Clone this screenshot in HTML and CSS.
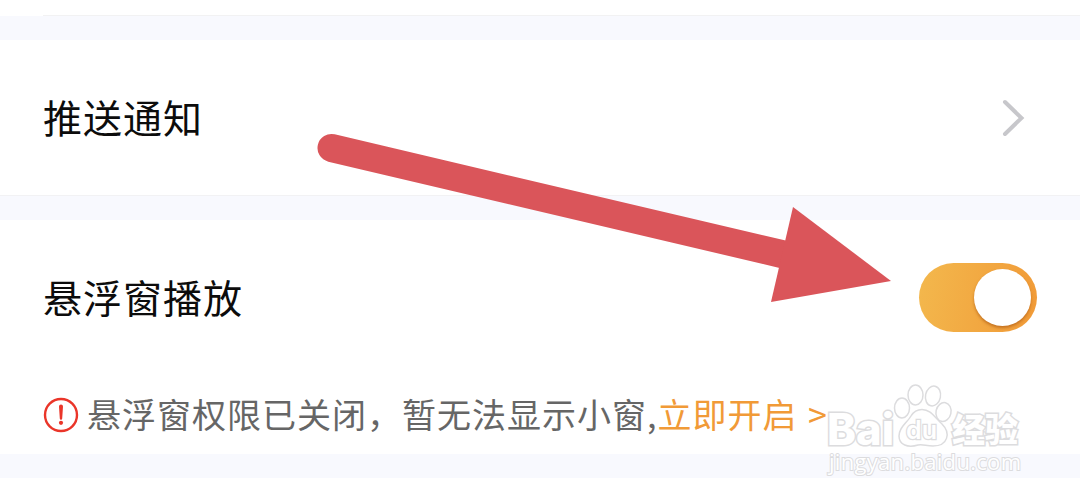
FILE: index.html
```html
<!DOCTYPE html>
<html lang="zh-CN">
<head>
    <meta charset="UTF-8">
    <meta name="viewport" content="width=device-width, initial-scale=1.0">
    <title>设置</title>
    <link rel="stylesheet" href="styles.css">
</head>
<body>
    <div class="wrap">
        <div class="prev"></div>
        <div class="gap"></div>
        <div class="item push">
            <span class="title">推送通知</span>
            <svg class="more" width="24" height="40" viewBox="0 0 24 40">
                <path d="M3 4L19.500 20L3 36"/>
            </svg>
        </div>
        <div class="gap line"></div>
        <div class="float">
            <div class="item">
                <span class="title">悬浮窗播放</span>
                <div class="switch"><i></i></div>
            </div>
            <p class="tip">
                <svg class="warn" width="36" height="36" viewBox="0 0 36 36">
                    <circle class="ring" cx="18" cy="18" r="16"/>
                    <path d="M16 9.500a2 2 0 0 1 4 0L19.200 21.500a1.200 1.200 0 0 1-2.400 0z"/>
                    <circle cx="18" cy="25.800" r="2.100"/>
                </svg>
                <span>悬浮窗权限已关闭，暂无法显示小窗,</span><a href="javascript:;">立即开启 <b>&gt;</b></a>
            </p>
        </div>
        <div class="gap"></div>
    </div>

    <!-- 箭头 -->
    <svg class="arrow" width="1080" height="500" viewBox="0 0 1080 500">
        <path class="shaft" d="M331.500 148L790 256"/>
        <path class="head" d="M793 207L891 281L771 302z"/>
    </svg>

    <!-- 水印 -->
    <svg class="mark" width="220" height="110" viewBox="0 0 220 110">
        <g class="logo">
            <text x="7" y="70" font-size="44" textLength="67" lengthAdjust="spacingAndGlyphs">Bai</text>
            <ellipse cx="82" cy="33" rx="7.500" ry="10"/>
            <ellipse cx="95.500" cy="20" rx="7.500" ry="10"/>
            <ellipse cx="113" cy="21" rx="7.500" ry="10" transform="rotate(12 113 21)"/>
            <ellipse cx="123.500" cy="37" rx="7.500" ry="9.500" transform="rotate(12 123.500 37)"/>
            <path d="M102 34.500C111 34.500 115 43 122 49C131 58 128 71 113 71C106 71 103 69 98 70C88 73 79 70 79 61C79 52 87 48 91 41C94 36 98 34.500 102 34.500z"/>
            <text class="du" x="86" y="64" font-size="25" textLength="31" lengthAdjust="spacingAndGlyphs">du</text>
            <text class="cn" x="132" y="67" font-size="33" textLength="66">经验</text>
        </g>
        <text class="site" x="9" y="95" font-size="22" textLength="192">jingyan.baidu.com</text>
    </svg>
</body>
</html>
```
FILE: styles.css
```css
*{
    padding: 0;
    margin: 0;
    box-sizing: border-box;
}
body{
    position: relative;
    height: 500px;
    overflow: hidden;
    background-color: #fff;
    font-family: "Noto Sans CJK SC", sans-serif;
}
a{
    text-decoration: none;
}
.prev{
    height: 16px;
    margin-left: 43px;
    border-bottom: 1px solid #f2f2f3;
}
.gap{
    height: 24px;
    background-color: #f8f9fe;
}
.line{
    height: 25px;
    border-top: 1px solid #f2f2f4;
}
.item{
    display: flex;
    justify-content: space-between;
    align-items: center;
    padding: 0 43px;
}
.push{
    height: 155px;
    padding-right: 54px;
}
.title{
    padding-bottom: 3px;
    font-size: 39px;
    letter-spacing: 1px;
    line-height: 60px;
    color: #0c0c0c;
}
.more path{
    fill: none;
    stroke: #c7c7cb;
    stroke-width: 4;
    stroke-linecap: round;
}
.float{
    height: 234px;
}
.float .item{
    height: 155px;
}
.switch{
    display: flex;
    justify-content: flex-end;
    width: 118px;
    height: 69px;
    padding: 6px;
    border-radius: 35px;
    background: linear-gradient(100deg, #f3b84d, #f19a37);
}
.switch i{
    width: 57px;
    height: 57px;
    border-radius: 50%;
    background-color: #fff;
    box-shadow: 0 2px 3px rgba(160, 75, 10, .55);
}
.tip{
    display: flex;
    align-items: center;
    height: 80px;
    padding-left: 43px;
    font-size: 34px;
    letter-spacing: 1px;
    line-height: 52px;
    color: #666;
    white-space: pre;
}
.tip span,
.tip a{
    padding-bottom: 2px;
}
.tip a{
    color: #f19a37;
}
.tip b{
    margin-left: 2px;
    font-weight: normal;
}
.warn{
    margin-right: 8px;
    fill: #ea3529;
}
.warn .ring{
    fill: none;
    stroke: #ea3529;
    stroke-width: 2.4;
}
.arrow{
    position: absolute;
    left: 0;
    top: 0;
}
.shaft{
    stroke: #da555a;
    stroke-width: 28;
    stroke-linecap: round;
}
.head{
    fill: #da555a;
}
.mark{
    position: absolute;
    left: 820px;
    top: 375px;
    font-family: "Open Sans", "Noto Sans CJK SC", sans-serif;
    fill: #fff;
    stroke: #dcdcde;
    stroke-width: 1.5;
}
.logo text{
    font-family: Inter, sans-serif;
    font-weight: 800;
    stroke-width: 3;
    paint-order: stroke;
}
.logo .du{
    font-weight: 600;
    stroke-width: 2.4;
}
.logo .cn{
    font-family: "Noto Sans CJK SC", sans-serif;
    font-weight: 900;
}
.site{
    stroke-width: 2;
    paint-order: stroke;
}
```
